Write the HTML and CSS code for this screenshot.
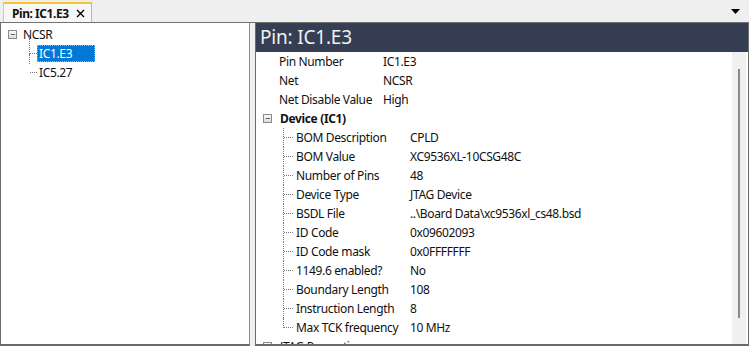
FILE: index.html
```html
<!DOCTYPE html>
<html lang="en">
<head>
  <meta charset="UTF-8">
  <title>Pin: IC1.E3</title>
  <link rel="stylesheet" href="styles.css">
</head>
<body>
  <div class="tabbar">
    <div class="tab">
      <span class="tab-title">Pin: IC1.E3</span>
      <svg class="tab-close" width="9" height="9" viewBox="0 0 9 9"><path d="M1 1l7 7M8 1L1 8" stroke="#000" stroke-width="1.4"/></svg>
    </div>
    <div class="tab-menu">
      <svg width="9" height="5" viewBox="0 0 9 5"><path d="M0 0h9L4.5 5z" fill="#000"/></svg>
    </div>
  </div>

  <div class="main">
    <!-- net / pin tree -->
    <div class="tree">
      <div class="node">
        <span class="box">&minus;</span>
        <span class="node-text">NCSR</span>
      </div>
      <div class="children">
        <div class="leaf"><span class="leaf-text selected">IC1.E3</span></div>
        <div class="leaf last"><span class="leaf-text">IC5.27</span></div>
      </div>
    </div>

    <!-- property panel -->
    <div class="props">
      <div class="props-title">Pin: IC1.E3</div>
      <div class="props-body">
        <div class="grid">
          <div class="row"><span class="key">Pin Number</span><span class="val">IC1.E3</span></div>
          <div class="row"><span class="key">Net</span><span class="val">NCSR</span></div>
          <div class="row"><span class="key">Net Disable Value</span><span class="val">High</span></div>
          <div class="row group"><span class="box">&minus;</span><span class="group-name">Device (IC1)</span></div>
          <div class="sub">
            <div class="row"><span class="key">BOM Description</span><span class="val">CPLD</span></div>
            <div class="row"><span class="key">BOM Value</span><span class="val">XC9536XL-10CSG48C</span></div>
            <div class="row"><span class="key">Number of Pins</span><span class="val">48</span></div>
            <div class="row"><span class="key">Device Type</span><span class="val">JTAG Device</span></div>
            <div class="row"><span class="key">BSDL File</span><span class="val">..\Board Data\xc9536xl_cs48.bsd</span></div>
            <div class="row"><span class="key">ID Code</span><span class="val">0x09602093</span></div>
            <div class="row"><span class="key">ID Code mask</span><span class="val">0x0FFFFFFF</span></div>
            <div class="row"><span class="key">1149.6 enabled?</span><span class="val">No</span></div>
            <div class="row"><span class="key">Boundary Length</span><span class="val">108</span></div>
            <div class="row"><span class="key">Instruction Length</span><span class="val">8</span></div>
            <div class="row last"><span class="key">Max TCK frequency</span><span class="val">10 MHz</span></div>
          </div>
          <div class="row group"><span class="box">+</span><span class="group-name plain">JTAG Properties</span></div>
        </div>
        <div class="scrollbar"><div class="thumb"></div></div>
      </div>
    </div>
  </div>
</body>
</html>
```

FILE: styles.css
```css
body {
  margin: 0;
  width: 749px;
  height: 346px;
  overflow: hidden;
  background-color: #efefef;
  font-family: "Noto Sans", "Liberation Sans", sans-serif;
  font-size: 12px;
  letter-spacing: -0.35px;
  color: #111;
}
.tabbar {
  height: 22px;
  display: flex;
  align-items: flex-end;
  border-bottom: 1px solid #717171;
}
.tab {
  margin-left: 3px;
  width: 89px;
  height: 20px;
  border-top: 2px solid #f7c531;
  border-left: 1px solid #c9c9c9;
  border-right: 1px solid #b5b5b5;
  background: #f7f7f7;
  box-sizing: border-box;
  display: flex;
  align-items: center;
  padding-left: 8px;
}
.tab-title {
  font-weight: bold;
  font-size: 12px;
  letter-spacing: -0.45px;
}
.tab-close {
  margin-left: auto;
  margin-right: 6px;
}
.tab-menu {
  margin-left: auto;
  margin-right: 9px;
  height: 22px;
  display: flex;
  align-items: center;
}
.main {
  display: flex;
  height: 323px;
}
.tree {
  width: 250px;
  background: #fff;
  border-left: 1px solid #6b6b6b;
  border-right: 1px solid #8c8c8c;
  border-bottom: 2px solid #6b6b6b;
  box-sizing: border-box;
  padding: 2px 0 0 7px;
}
.box {
  display: inline-flex;
  width: 7px;
  height: 7px;
  border: 1px solid #8a8a8a;
  background: linear-gradient(#f8f8f8, #dcdcdc);
  font-size: 9px;
  line-height: 7px;
  letter-spacing: 0;
  justify-content: center;
  color: #222;
}
.node {
  height: 19px;
  display: flex;
  align-items: center;
}
.node-text {
  margin-left: 6px;
}
.children {
  margin-left: 21px;
}
.leaf {
  height: 19px;
  display: flex;
  align-items: center;
  position: relative;
  padding-left: 8px;
}
.leaf::before {
  content: "";
  position: absolute;
  left: 0;
  top: -9px;
  height: 19px;
  border-left: 1px dotted #777;
}
.leaf.last::before {
  height: 10px;
}
.leaf::after {
  content: "";
  position: absolute;
  left: 1px;
  top: 9px;
  width: 7px;
  border-top: 1px dotted #777;
}
.leaf-text {
  display: inline-block;
  height: 17px;
  line-height: 17px;
  padding-left: 2px;
}
.selected {
  background: #0078d7;
  color: #fff;
  outline: 1px dotted #f2a14a;
  outline-offset: -1px;
  width: 56px;
}
.props {
  margin-left: 5px;
  flex: 1;
  display: flex;
  flex-direction: column;
  border-left: 1px solid #6b6b6b;
  border-right: 1px solid #6b6b6b;
  border-bottom: 2px solid #6b6b6b;
  background: #fff;
}
.props-title {
  height: 29px;
  background: #363e53;
  color: #eef0f5;
  font-size: 19px;
  letter-spacing: -0.2px;
  line-height: 28px;
  padding-left: 4px;
}
.props-body {
  flex: 1;
  display: flex;
  overflow: hidden;
}
.grid {
  flex: 1;
  padding-left: 6px;
}
.row {
  height: 19px;
  display: flex;
  align-items: center;
  position: relative;
}
.key {
  width: 104px;
  padding-left: 17px;
  flex-shrink: 0;
}
.group .box {
  margin-left: 1px;
}
.group-name {
  margin-left: 8px;
  font-weight: bold;
}
.group-name.plain {
  font-weight: normal;
}
.sub .key {
  width: 114px;
  padding-left: 34px;
}
.sub .row::before {
  content: "";
  position: absolute;
  left: 21px;
  top: 0;
  height: 19px;
  border-left: 1px dotted #777;
}
.sub .row.last::before {
  height: 10px;
}
.sub .row::after {
  content: "";
  position: absolute;
  left: 22px;
  top: 9px;
  width: 9px;
  border-top: 1px dotted #777;
}
.scrollbar {
  width: 14px;
  margin-right: 2px;
  background: #f0f0f0;
  padding-top: 17px;
  display: flex;
  justify-content: center;
}
.thumb {
  width: 2px;
  height: 249px;
  background: #8a8a8a;
}
```
